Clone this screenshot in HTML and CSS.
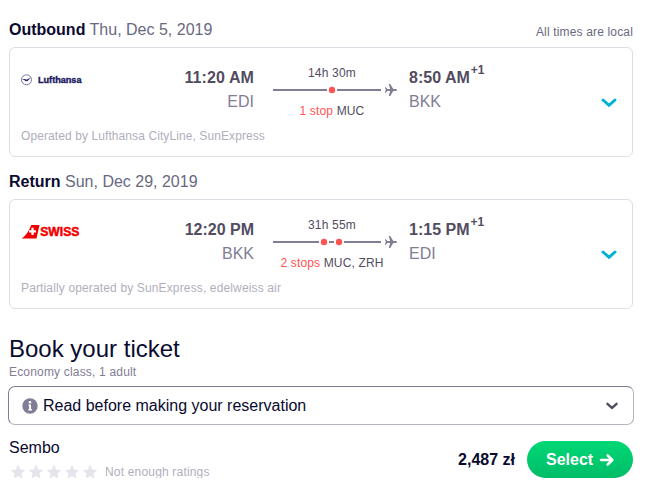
FILE: index.html
```html
<!DOCTYPE html>
<html lang="en">
<head>
<meta charset="utf-8">
<title>Book your ticket</title>
<link rel="stylesheet" href="styles.css">
</head>
<body>
<main class="page">
  <header class="leg-head">
    <h2 class="leg-title"><b>Outbound</b> <span>Thu, Dec 5, 2019</span></h2>
    <span class="note">All times are local</span>
  </header>
  <section class="card">
    <div class="route">
      <svg class="logo" width="62" height="20" viewBox="0 0 62 20">
        <circle cx="5.5" cy="9.8" r="5" fill="none" stroke="#6765a0" stroke-width=".9"/>
        <path d="M.8 9H4.2L5.4 9.8 9.7 7.6 6.8 11 4.5 11.2 3.2 10Z" fill="#292875"/>
        <text class="lufthansa" x="17" y="13" textLength="43.5" lengthAdjust="spacingAndGlyphs">Lufthansa</text>
      </svg>
      <div class="depart"><div class="time wide">11:20 AM</div><div class="code">EDI</div></div>
      <div class="trip">
        <div class="duration">14h 30m</div>
        <svg class="line" width="126" height="14" viewBox="0 0 126 14">
          <path d="M0 7H54M64 7H108" stroke="#827d96" stroke-width="2"/>
          <circle cx="59" cy="7" r="3.2" fill="#ff5452"/>
          <path d="M112 4.2H113L114.2 6.1H117.2L115.7 1H117.2L120.3 6.1H123A.9.9 0 0 1 123 7.9H120.3L117.2 13H115.7L117.2 7.9H114.2L113 9.8H112L112.7 7Z" fill="#827d96"/>
        </svg>
        <div class="stops"><span class="count">1 stop</span> MUC</div>
      </div>
      <div class="arrive"><div class="time">8:50 AM<span class="plus">+1</span></div><div class="code">BKK</div></div>
      <svg class="chev" width="18" height="12" viewBox="0 0 18 12"><path d="M3 3 9 8.3 15 3" fill="none" stroke="#00b2d6" stroke-width="3" stroke-linecap="round"/></svg>
    </div>
    <p class="operator">Operated by Lufthansa CityLine, SunExpress</p>
  </section>

  <header class="leg-head second">
    <h2 class="leg-title"><b>Return</b> <span>Sun, Dec 29, 2019</span></h2>
  </header>
  <section class="card">
    <div class="route">
      <svg class="logo" width="62" height="20" viewBox="0 0 62 20">
        <path d="M.8 16.5Q7 12 10.2 3H18.5L15.5 16.5Z" fill="#f00000"/>
        <path d="M11.5 5.8V13M8 9.4H15" stroke="#fff" stroke-width="2.3"/>
        <text class="swiss" x="19.3" y="13.8" textLength="39" lengthAdjust="spacingAndGlyphs">SWISS</text>
      </svg>
      <div class="depart"><div class="time">12:20 PM</div><div class="code">BKK</div></div>
      <div class="trip">
        <div class="duration">31h 55m</div>
        <svg class="line" width="126" height="14" viewBox="0 0 126 14">
          <path d="M0 7H46M56 7H61M71 7H108" stroke="#827d96" stroke-width="2"/>
          <circle cx="51" cy="7" r="3.2" fill="#ff5452"/>
          <circle cx="66" cy="7" r="3.2" fill="#ff5452"/>
          <path d="M112 4.2H113L114.2 6.1H117.2L115.7 1H117.2L120.3 6.1H123A.9.9 0 0 1 123 7.9H120.3L117.2 13H115.7L117.2 7.9H114.2L113 9.8H112L112.7 7Z" fill="#827d96"/>
        </svg>
        <div class="stops"><span class="count">2 stops</span> MUC, ZRH</div>
      </div>
      <div class="arrive"><div class="time">1:15 PM<span class="plus">+1</span></div><div class="code">EDI</div></div>
      <svg class="chev" width="18" height="12" viewBox="0 0 18 12"><path d="M3 3 9 8.3 15 3" fill="none" stroke="#00b2d6" stroke-width="3" stroke-linecap="round"/></svg>
    </div>
    <p class="operator">Partially operated by SunExpress, edelweiss air</p>
  </section>

  <h1 class="book">Book your ticket</h1>
  <p class="class-info">Economy class, 1 adult</p>
  <div class="read">
    <svg width="16" height="16" viewBox="0 0 16 16"><circle cx="8" cy="8" r="7.7" fill="#827d96"/><path d="M6.5 6.5H9V11H10V12.5H6.3V11H7.1V8H6.5Z" fill="#fff"/><circle cx="8" cy="4.3" r="1.3" fill="#fff"/></svg>
    <span class="read-text">Read before making your reservation</span>
    <svg class="read-chev" width="14" height="10" viewBox="0 0 14 10"><path d="M2.4 2.8 7 6.9 11.6 2.8" fill="none" stroke="#524c61" stroke-width="2.4" stroke-linecap="round"/></svg>
  </div>
  <div class="offer">
    <div class="agent">
      <div class="agent-name">Sembo</div>
      <div class="rating">
        <svg width="90" height="16" viewBox="0 0 90 16" fill="#e5e4eb">
          <defs><path id="star" d="M9 .5 11.1 5.4 16.2 5.9 12.4 9.4 13.5 14.7 9 12 4.5 14.7 5.6 9.4 1.8 5.9 6.9 5.4Z"/></defs>
          <use href="#star"/><use href="#star" x="18"/><use href="#star" x="36"/><use href="#star" x="54"/><use href="#star" x="72"/>
        </svg>
        <span class="rating-text">Not enough ratings</span>
      </div>
    </div>
    <b class="price">2,487 zł</b>
    <a class="select"><span>Select</span>
      <svg width="16" height="14" viewBox="0 0 16 14"><path d="M2 7H12.8M8.7 2.5 13.3 7 8.7 11.5" fill="none" stroke="#fff" stroke-width="2.6" stroke-linecap="round" stroke-linejoin="round"/></svg>
    </a>
  </div>
</main>
</body>
</html>
```
FILE: styles.css
```css
* { box-sizing: border-box; }
body { margin: 0; background: #fff; font-family: "Liberation Sans", Arial, sans-serif; font-size: 12px; color: #524c61; }
h1, h2, p { margin: 0; font-weight: normal; }
svg { display: block; flex: none; }
.page { width: 659px; padding: 18px 26px 0 9px; white-space: nowrap; }
.leg-head { height: 29px; display: flex; justify-content: space-between; }
.leg-head.second { height: 42px; padding-top: 13px; }
.leg-title { font-size: 16px; line-height: 23px; color: #68697f; }
.leg-title b { color: #0a0a30; }
.note { line-height: 28px; color: #68697f; letter-spacing: .16px; }
.card { height: 110px; border: 1px solid #dddde5; border-radius: 6px; padding: 15px 14px 0 11px; }
.route { display: grid; grid-template-columns: 62px 171px 125px 1fr 18px; height: 63px; }
.logo { margin-top: 7px; }
.logo text { font-family: "Liberation Sans", Arial, sans-serif; font-weight: bold; }
.lufthansa { font-size: 8.8px; fill: #171660; stroke: #171660; stroke-width: .35px; }
.swiss { font-size: 12px; fill: #f00000; stroke: #f00000; stroke-width: .5px; }
.depart { text-align: right; }
.trip { margin-left: 19px; width: 124px; }
.arrive { margin-left: 30px; }
.time { font-size: 16px; line-height: 29px; height: 28px; font-weight: bold; }
.time.wide { letter-spacing: .1px; }
.plus { font-size: 12px; line-height: 0; position: relative; top: -9px; left: 1px; }
.code { font-size: 16px; line-height: 22px; color: #827d96; }
.duration, .stops { text-align: center; width: 118px; }
.duration { line-height: 20px; height: 20px; letter-spacing: .2px; }
.line { overflow: visible; }
.stops { line-height: 28px; letter-spacing: .15px; }
.count { color: #ff5452; }
.chev { margin-top: 34px; }
.operator { line-height: 20px; color: #b2aebd; letter-spacing: .09px; }
.card:nth-of-type(2) .operator { letter-spacing: .14px; }
.book { font-size: 24px; line-height: 32px; margin-top: 24px; color: #0a0a30; }
.class-info { line-height: 14px; color: #827d96; letter-spacing: .18px; }
.read { height: 39px; width: 626px; margin: 7px 0 0 -1px; border: 1px solid; border-color: #827d96 #b5b3bf #b5b3bf #827d96; border-radius: 7px; padding: 0 14px 0 13px; display: flex; align-items: center; }
.read-text { margin-left: 5px; font-size: 16px; color: #0a0a30; }
.read-chev { margin-left: auto; }
.offer { display: flex; align-items: center; height: 37px; margin-top: 16px; }
.agent { align-self: flex-start; margin-top: -3px; }
.agent-name { font-size: 16px; line-height: 20px; color: #0a0a30; }
.rating { display: flex; align-items: center; margin-top: 6px; }
.rating-text { margin-left: 6px; color: #b2aebd; letter-spacing: .18px; }
.price { margin-left: auto; font-size: 16px; color: #0a0a30; }
.select { margin-left: 12px; width: 106px; height: 37px; border-radius: 19px; background: linear-gradient(#00d775, #00bd68); color: #fff; font-size: 16px; font-weight: bold; display: flex; align-items: center; padding-left: 19px; gap: 6px; }
```
